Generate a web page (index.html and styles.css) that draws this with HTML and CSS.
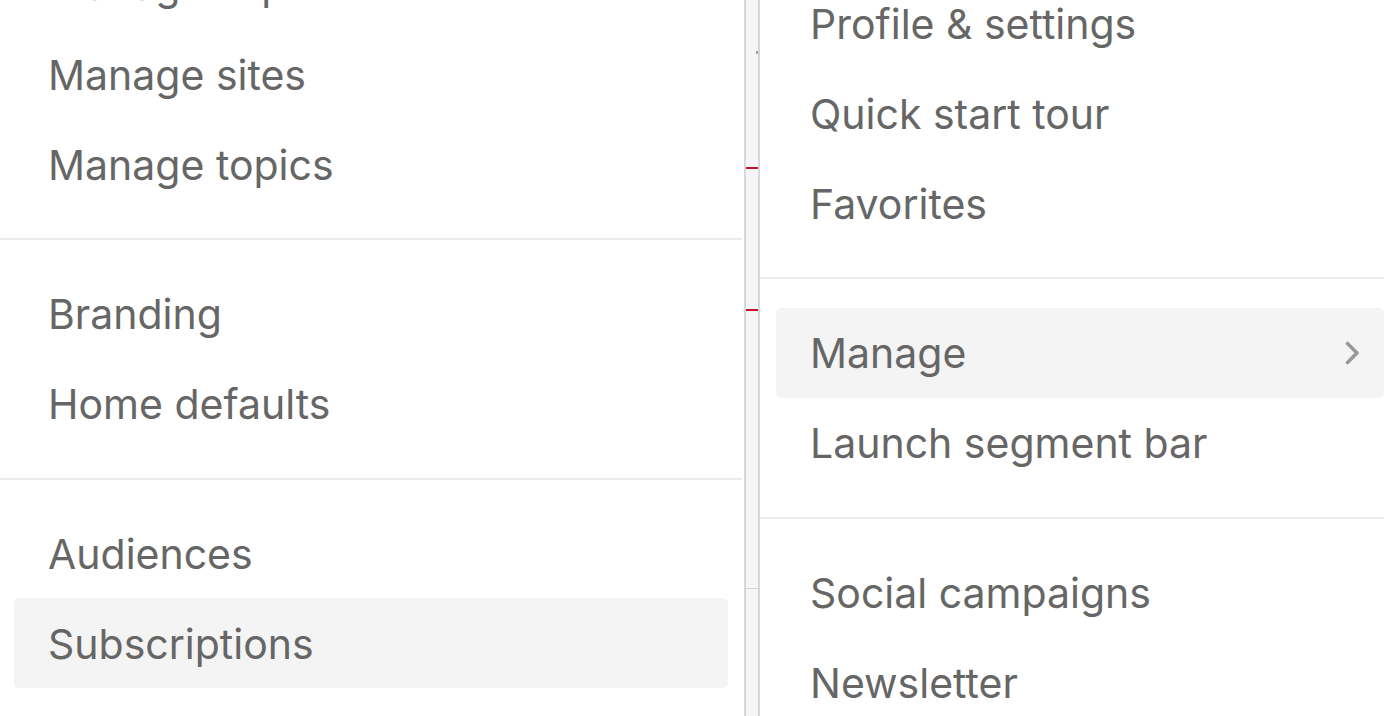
FILE: index.html
```html
<!DOCTYPE html>
<html lang="en">
<head>
<meta charset="utf-8">
<title>Menus</title>
<link rel="stylesheet" href="styles.css">
</head>
<body>
<div class="stage">
  <nav class="panel panel-left">
    <div class="group group-first">
      <div class="item">Manage experts</div>
      <div class="item">Manage sites</div>
      <div class="item">Manage topics</div>
    </div>
    <div class="group">
      <div class="item">Branding</div>
      <div class="item">Home defaults</div>
    </div>
    <div class="group">
      <div class="item">Audiences</div>
      <div class="item item-active">Subscriptions</div>
    </div>
  </nav>

  <div class="gutter">
    <div class="gutter-top">
      <span class="tick"></span>
      <span class="mark mark-1"></span>
      <span class="mark mark-2"></span>
    </div>
    <div class="gutter-bottom"></div>
  </div>

  <nav class="panel panel-right">
    <div class="group group-first">
      <div class="item">Profile &amp; settings</div>
      <div class="item">Quick start tour</div>
      <div class="item">Favorites</div>
    </div>
    <div class="group">
      <div class="item item-active item-sub">
        <span>Manage</span>
        <svg class="chevron" width="18" height="26" viewBox="0 0 18 26" aria-hidden="true">
          <path d="M4.5 3.5 L14 13 L4.5 22.5" fill="none" stroke="#999999" stroke-width="3.6" stroke-linecap="round" stroke-linejoin="round"/>
        </svg>
      </div>
      <div class="item">Launch segment bar</div>
    </div>
    <div class="group">
      <div class="item">Social campaigns</div>
      <div class="item">Newsletter</div>
    </div>
  </nav>
</div>
</body>
</html>
```

FILE: styles.css
```css
*, *::before, *::after {
  box-sizing: border-box;
}

html, body {
  margin: 0;
  padding: 0;
  background: #ffffff;
  overflow: hidden;
}

body {
  width: 1384px;
  height: 716px;
  font-family: Inter, Roboto, "Liberation Sans", sans-serif;
  color: #666666;
}

.stage {
  display: flex;
  align-items: flex-start;
  width: 1400px;
  height: 716px;
}

.panel {
  flex: none;
}

.panel-left {
  width: 742px;
  margin-top: -61px;
}

.panel-right {
  width: 640px;
  margin-top: -22px;
}

.group {
  padding: 28.5px 0 29px;
  border-top: 2px solid #ebebeb;
}

.group-first {
  padding-top: 0;
  border-top: 0;
}

.item {
  height: 90px;
  display: flex;
  align-items: center;
  padding: 2px 23px 0 34px;
  margin: 0 14px 0 14px;
  font-size: 41px;
  font-weight: 400;
  line-height: 1;
  border-radius: 5px;
  white-space: nowrap;
}

.panel-right .item {
  margin: 0 16px 0 16px;
}

.item-active {
  background: #f4f4f4;
}

.item-sub {
  justify-content: space-between;
}

.chevron {
  display: block;
  margin-top: -2px;
}

.gutter {
  flex: none;
  width: 16px;
  height: 716px;
  margin-left: 2px;
  border-left: 2px solid #d6d6d6;
  border-right: 2px solid #d6d6d6;
  background: #f6f6f6;
  display: flex;
  flex-direction: column;
}

.gutter-top {
  position: relative;
  height: 588px;
  flex: none;
}

.gutter-bottom {
  flex: 1;
  border-top: 1px solid #d6d6d6;
}

.tick {
  position: absolute;
  right: 0;
  top: 51px;
  width: 2px;
  height: 3px;
  background: #a0a0a0;
}

.mark {
  position: absolute;
  left: 0;
  right: 0;
  height: 2px;
  background: #c8102e;
}

.mark-1 { top: 167px; }
.mark-2 { top: 309px; }
```
